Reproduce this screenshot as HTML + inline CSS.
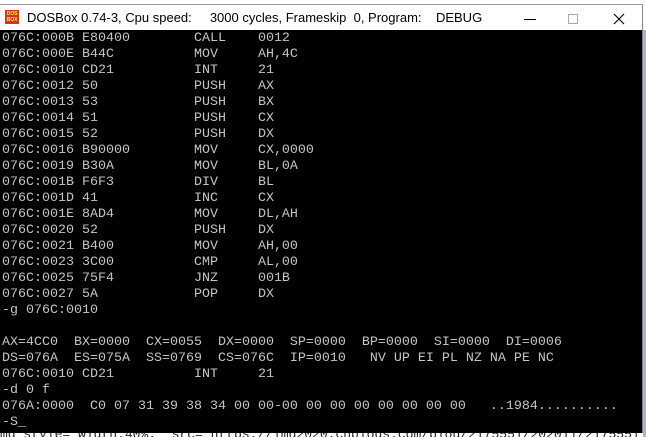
<!DOCTYPE html>
<html><head><style>
html,body{margin:0;padding:0;width:646px;height:437px;overflow:hidden;background:#fff;position:relative}
#win{position:absolute;left:0;top:4px;width:642px;height:428px;border-top:1px solid #999;border-right:1px solid #888;background:#fff}
#title{position:absolute;left:27px;top:5px;font:13px "Liberation Sans",sans-serif;color:#000;white-space:pre}
#icon{position:absolute;left:5px;top:5px;width:14px;height:14px;background:#c33;color:#ff0;font:bold 5px "Liberation Sans",sans-serif;line-height:6px;text-align:center;padding-top:1px;box-sizing:border-box}
#scr{position:absolute;left:0;top:25px;width:642px;height:403px;background:#000}
pre{margin:0;position:absolute;left:2px;top:1px;font:13.333px/16px "Liberation Mono",monospace;color:#c4c4c4}
#bot{position:absolute;left:0;top:428px;font:13px "Liberation Mono",monospace;color:#222;white-space:pre;line-height:14px}
.ctl{position:absolute;top:6px}
#side{position:absolute;left:643px;top:30px;width:3px;height:407px;background:#aab4c8}
</style></head><body>
<div id="side"></div>
<div id="bot">mg style="width:40%;" src="https://img2020.cnblogs.com/blog/2175551/202011/2175551</div>
<div id="win">
<div id="icon">DOS<br>BOX</div>
<div id="title">DOSBox 0.74-3, Cpu speed:     3000 cycles, Frameskip  0, Program:    DEBUG</div>
<svg class="ctl" style="left:522px" width="16" height="16"><line x1="2" y1="8.5" x2="14" y2="8.5" stroke="#000"/></svg>
<svg class="ctl" style="left:566px" width="16" height="16"><rect x="2.5" y="3.5" width="9" height="9" fill="none" stroke="#aaa"/></svg>
<svg class="ctl" style="left:612px" width="16" height="16"><path d="M2 3L12 13M12 3L2 13" stroke="#000" stroke-width="1.1"/></svg>
<div id="scr"><pre>076C:000B E80400        CALL    0012
076C:000E B44C          MOV     AH,4C
076C:0010 CD21          INT     21
076C:0012 50            PUSH    AX
076C:0013 53            PUSH    BX
076C:0014 51            PUSH    CX
076C:0015 52            PUSH    DX
076C:0016 B90000        MOV     CX,0000
076C:0019 B30A          MOV     BL,0A
076C:001B F6F3          DIV     BL
076C:001D 41            INC     CX
076C:001E 8AD4          MOV     DL,AH
076C:0020 52            PUSH    DX
076C:0021 B400          MOV     AH,00
076C:0023 3C00          CMP     AL,00
076C:0025 75F4          JNZ     001B
076C:0027 5A            POP     DX
-g 076C:0010

AX=4CC0  BX=0000  CX=0055  DX=0000  SP=0000  BP=0000  SI=0000  DI=0006
DS=076A  ES=075A  SS=0769  CS=076C  IP=0010   NV UP EI PL NZ NA PE NC
076C:0010 CD21          INT     21
-d 0 f
076A:0000  C0 07 31 39 38 34 00 00-00 00 00 00 00 00 00 00   ..1984..........
-S_</pre></div>
</div>
</body></html>
